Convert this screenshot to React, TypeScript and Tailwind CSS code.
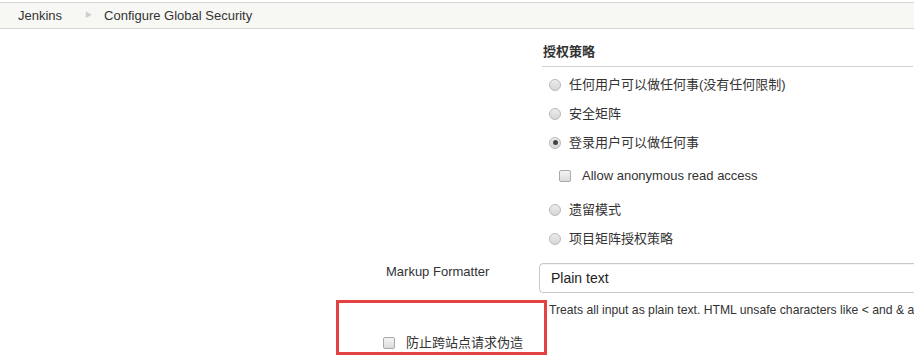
import React from 'react';

const font = 'font-["Liberation_Sans","Noto_Sans_CJK_SC",Arial,sans-serif]';

const Radio: React.FC<{ checked?: boolean }> = ({ checked }) => (
  <span className="flex h-[12px] w-[12px] shrink-0 items-center justify-center rounded-full border border-[#b9b9b9] bg-gradient-to-b from-[#ececec] to-[#d6d6d6]">
    {checked && <span className="h-[5px] w-[5px] rounded-full bg-[#444]" />}
  </span>
);

const Checkbox: React.FC = () => (
  <span className="block h-[12px] w-[12px] shrink-0 rounded-[2px] border border-[#a9a9a9] bg-gradient-to-b from-[#f4f4f4] to-[#dcdcdc]" />
);

const strategies = [
  { label: '任何用户可以做任何事(没有任何限制)' },
  { label: '安全矩阵' },
  { label: '登录用户可以做任何事', checked: true },
];

const App: React.FC = () => {
  return (
    <div className={`h-[362px] w-[914px] overflow-hidden bg-white text-[13px] text-[#333] ${font}`}>
      {/* breadcrumb */}
      <div className="mt-[2px] flex h-[27px] items-center border-y border-[#d3d7cf] bg-[#f7f8f4] pl-[18px]">
        <span>Jenkins</span>
        <span className="ml-[23px] mr-[12px] text-[7px] text-[#cdcdcd]">▶</span>
        <span>Configure Global Security</span>
      </div>

      {/* authorization strategy */}
      <div className="ml-[542px] mr-[1px]">
        <div className="border-b border-[#cfcfcf] pb-[6px] pl-[1px] pt-[15px] font-bold leading-[16px]">授权策略</div>
        <div className="mt-[3px]">
          {strategies.map((s) => (
            <div key={s.label} className="flex h-[29px] items-center gap-[8px] pl-[7px]">
              <Radio checked={s.checked} />
              <span>{s.label}</span>
            </div>
          ))}
          <div className="flex h-[38px] items-center gap-[11px] pl-[17px]">
            <Checkbox />
            <span>Allow anonymous read access</span>
          </div>
          {['遗留模式', '项目矩阵授权策略'].map((l) => (
            <div key={l} className="flex h-[29px] items-center gap-[8px] pl-[7px]">
              <Radio />
              <span>{l}</span>
            </div>
          ))}
        </div>
      </div>

      {/* markup formatter */}
      <div className="mt-[10px] flex">
        <div className="w-[539px] shrink-0 pl-[386px] pt-[1px] leading-[16px]">Markup Formatter</div>
        <div className="flex h-[30px] w-[400px] shrink-0 items-center rounded-[4px] border border-[#c8c8c8] pl-[11px] text-[14px] text-[#222] shadow-[inset_0_1px_1px_rgba(0,0,0,0.05)]">
          Plain text
        </div>
      </div>

      <div className="relative">
        <div className="flex">
          <div className="w-[549px] shrink-0" />
          <div className="whitespace-nowrap pt-[9px] text-[12.2px] leading-[16px]">
            Treats all input as plain text. HTML unsafe characters like &lt; and &amp; are escaped to their respective character entities.
          </div>
        </div>
        <div className="mt-[15px] flex items-center gap-[11px] pl-[383px]">
          <Checkbox />
          <span>防止跨站点请求伪造</span>
        </div>
        <div className="absolute left-[336px] top-[7px] h-[55px] w-[211px] border-[3px] border-[#e24242]" />
      </div>
    </div>
  );
};

export default App;
